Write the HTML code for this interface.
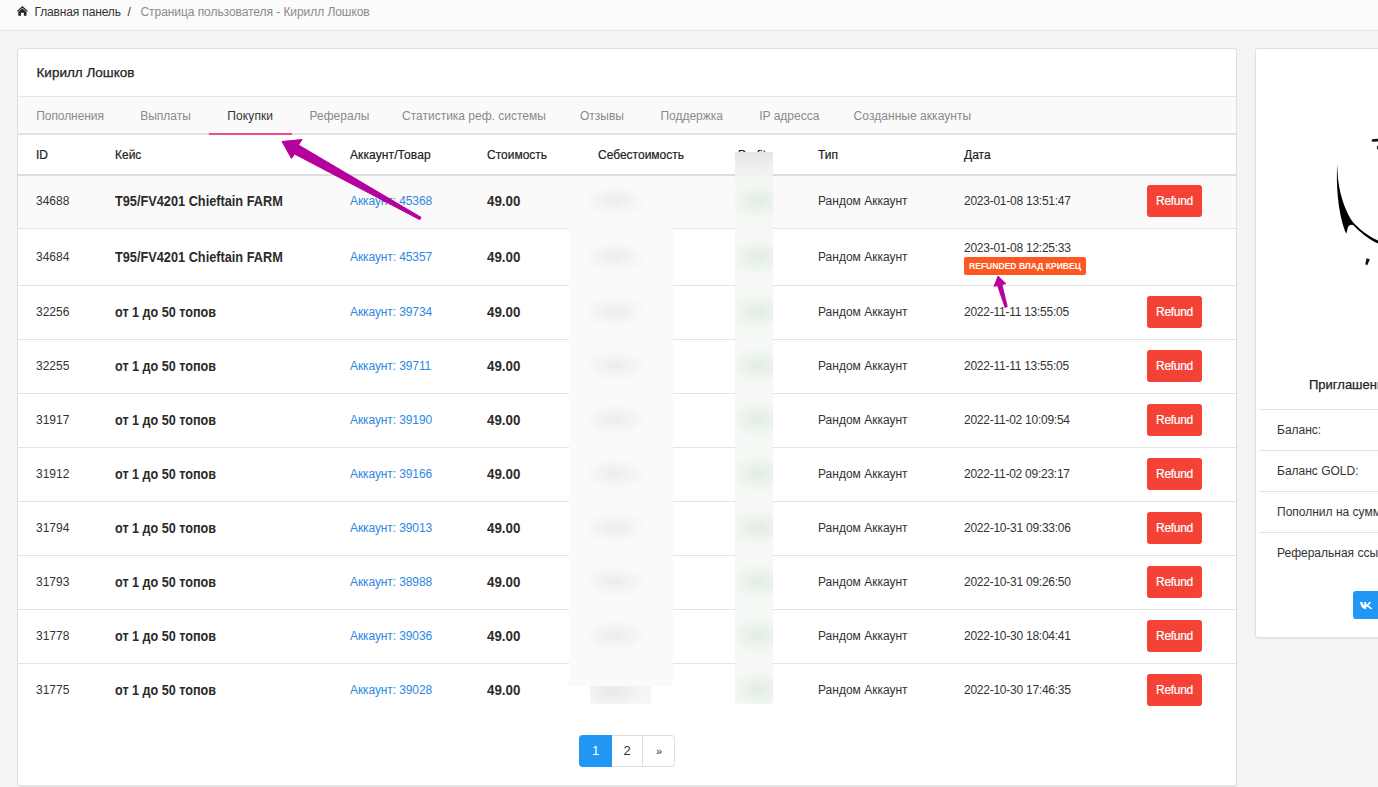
<!DOCTYPE html>
<html><head><meta charset="utf-8">
<style>
html,body{margin:0;padding:0;}
body{width:1378px;height:787px;overflow:hidden;background:#f4f4f4;position:relative;font-family:"Liberation Sans",sans-serif;color:#333;}
.t{position:absolute;white-space:pre;}
.blk{position:absolute;}
.b{font-weight:bold;}
.c333{color:#333;}
.c222{color:#222;}
.bc{color:#2b2b2b;}
.med{-webkit-text-stroke:0.2px currentColor;}
.lnk{color:#2d88e2;}
.gray{color:#8a8a8a;}
.btn{position:absolute;left:1147px;width:55px;height:32px;background:#f44336;border-radius:3px;color:#fff;font-size:12px;line-height:32px;text-align:center;letter-spacing:-0.3px;-webkit-text-stroke:0.2px #fff;}
.badge{position:absolute;left:964px;top:257px;width:122px;height:18px;background:#ff5722;border-radius:2px;color:#fff;font-weight:bold;font-size:9.5px;line-height:18px;text-align:center;}
.badge span{position:absolute;left:50%;top:0.3px;transform:translateX(-50%) scaleX(0.9);white-space:pre;}
</style></head><body>
<!-- breadcrumb -->
<div class="blk" style="left:0;top:0;width:1378px;height:30px;background:#fbfbfb;border-bottom:1px solid #e6e6e6"></div>
<svg class="blk" style="left:0;top:0" width="40" height="25" viewBox="0 0 40 25"><path d="M16.9 10.9 L22.4 6 L27.9 10.9 L27 11.8 L22.4 7.7 L17.8 11.8 Z M18.3 11.9 L22.4 8.4 L26.5 11.9 L26.5 15.8 L23.9 15.8 L23.9 12.8 L20.9 12.8 L20.9 15.8 L18.3 15.8 Z" fill="#222"/></svg>
<div class="t c333" style="left:34.5px;top:5.84px;font-size:12px;line-height:12px;letter-spacing:-0.15px">Главная панель</div>
<div class="t c333" style="left:127.5px;top:5.84px;font-size:12px;line-height:12px;">/</div>
<div class="t gray" style="left:140.5px;top:5.84px;font-size:12px;line-height:12px;letter-spacing:-0.06px">Страница пользователя - Кирилл Лошков</div>

<!-- main card -->
<div class="blk" style="left:17px;top:48px;width:1218px;height:736px;background:#fff;border:1px solid #e0e0e0;border-radius:3px;box-shadow:0 1px 1px rgba(0,0,0,0.05)"></div>
<div class="t c222" style="left:36.5px;top:65.57px;font-size:13.5px;line-height:13.5px;-webkit-text-stroke:0.25px #222">Кирилл Лошков</div>
<div class="blk" style="left:18px;top:96px;width:1218px;height:1px;background:#e6e6e6"></div>
<div class="blk" style="left:18px;top:97px;width:1218px;height:36px;background:#fafafa"></div>
<div class="blk" style="left:18px;top:133px;width:1218px;height:2px;background:#e2e2e2"></div>
<div class="t gray" style="left:36.3px;top:110.34px;font-size:12px;line-height:12px;letter-spacing:-0.08px">Пополнения</div>
<div class="t gray" style="left:140.2px;top:110.34px;font-size:12px;line-height:12px;">Выплаты</div>
<div class="t c333" style="left:227.3px;top:110.34px;font-size:12px;line-height:12px;letter-spacing:0.1px">Покупки</div>
<div class="t gray" style="left:309.6px;top:110.34px;font-size:12px;line-height:12px;">Рефералы</div>
<div class="t gray" style="left:402px;top:110.34px;font-size:12px;line-height:12px;">Статистика реф. системы</div>
<div class="t gray" style="left:580px;top:110.34px;font-size:12px;line-height:12px;">Отзывы</div>
<div class="t gray" style="left:660.4px;top:110.34px;font-size:12px;line-height:12px;">Поддержка</div>
<div class="t gray" style="left:759.2px;top:110.34px;font-size:12px;line-height:12px;">IP адресса</div>
<div class="t gray" style="left:853.6px;top:110.34px;font-size:12px;line-height:12px;letter-spacing:0.05px">Созданные аккаунты</div>
<div class="blk" style="left:209px;top:133px;width:83px;height:2px;background:#ea5091"></div>

<!-- table header -->
<div class="t c222 med" style="left:36px;top:149.34px;font-size:12px;line-height:12px;">ID</div>
<div class="t c222 med" style="left:115px;top:149.34px;font-size:12px;line-height:12px;">Кейс</div>
<div class="t c222 med" style="left:350px;top:149.34px;font-size:12px;line-height:12px;letter-spacing:0.1px">Аккаунт/Товар</div>
<div class="t c222 med" style="left:487px;top:149.34px;font-size:12px;line-height:12px;">Стоимость</div>
<div class="t c222 med" style="left:598px;top:149.34px;font-size:12px;line-height:12px;">Себестоимость</div>
<div class="t c222 med" style="left:738px;top:149.34px;font-size:12px;line-height:12px;">Profit</div>
<div class="t c222 med" style="left:818px;top:149.34px;font-size:12px;line-height:12px;">Тип</div>
<div class="t c222 med" style="left:964px;top:149.34px;font-size:12px;line-height:12px;">Дата</div>
<div class="blk" style="left:18px;top:174px;width:1218px;height:2px;background:#dcdcdc"></div>

<div class="blk" style="left:18px;top:176px;width:1218px;height:52px;background:#fafafa"></div>
<div class="blk" style="left:18px;top:228px;width:1218px;height:1px;background:#e3e3e3"></div>
<div class="t c333" style="left:36px;top:195.34px;font-size:12px;line-height:12px;">34688</div>
<div class="t b bc" style="left:115px;top:194.25px;font-size:14px;line-height:14px;transform:scaleX(0.91);transform-origin:0 0">T95/FV4201 Chieftain FARM</div>
<div class="t lnk" style="left:350px;top:195.34px;font-size:12px;line-height:12px;letter-spacing:-0.1px">Аккаунт: 45368</div>
<div class="t b bc" style="left:487px;top:194.25px;font-size:14px;line-height:14px;transform:scaleX(0.95);transform-origin:0 0">49.00</div>
<div class="t c333" style="left:818px;top:195.34px;font-size:12px;line-height:12px;">Рандом Аккаунт</div>
<div class="t c333" style="left:964px;top:195.34px;font-size:12px;line-height:12px;letter-spacing:-0.25px">2023-01-08 13:51:47</div>
<div class="btn" style="top:185.0px">Refund</div>
<div class="blk" style="left:18px;top:285px;width:1218px;height:1px;background:#e3e3e3"></div>
<div class="t c333" style="left:36px;top:250.84px;font-size:12px;line-height:12px;">34684</div>
<div class="t b bc" style="left:115px;top:249.75px;font-size:14px;line-height:14px;transform:scaleX(0.91);transform-origin:0 0">T95/FV4201 Chieftain FARM</div>
<div class="t lnk" style="left:350px;top:250.84px;font-size:12px;line-height:12px;letter-spacing:-0.1px">Аккаунт: 45357</div>
<div class="t b bc" style="left:487px;top:249.75px;font-size:14px;line-height:14px;transform:scaleX(0.95);transform-origin:0 0">49.00</div>
<div class="t c333" style="left:818px;top:250.84px;font-size:12px;line-height:12px;">Рандом Аккаунт</div>
<div class="t c333" style="left:964px;top:241.84px;font-size:12px;line-height:12px;letter-spacing:-0.25px">2023-01-08 12:25:33</div>
<div class="badge"><span>REFUNDED ВЛАД КРИВЕЦ</span></div>
<div class="blk" style="left:18px;top:339px;width:1218px;height:1px;background:#e3e3e3"></div>
<div class="t c333" style="left:36px;top:305.84px;font-size:12px;line-height:12px;">32256</div>
<div class="t b bc" style="left:115px;top:304.75px;font-size:14px;line-height:14px;transform:scaleX(0.9);transform-origin:0 0">от 1 до 50 топов</div>
<div class="t lnk" style="left:350px;top:305.84px;font-size:12px;line-height:12px;letter-spacing:-0.1px">Аккаунт: 39734</div>
<div class="t b bc" style="left:487px;top:304.75px;font-size:14px;line-height:14px;transform:scaleX(0.95);transform-origin:0 0">49.00</div>
<div class="t c333" style="left:818px;top:305.84px;font-size:12px;line-height:12px;">Рандом Аккаунт</div>
<div class="t c333" style="left:964px;top:305.84px;font-size:12px;line-height:12px;letter-spacing:-0.25px">2022-11-11 13:55:05</div>
<div class="btn" style="top:295.5px">Refund</div>
<div class="blk" style="left:18px;top:393px;width:1218px;height:1px;background:#e3e3e3"></div>
<div class="t c333" style="left:36px;top:359.84px;font-size:12px;line-height:12px;">32255</div>
<div class="t b bc" style="left:115px;top:358.75px;font-size:14px;line-height:14px;transform:scaleX(0.9);transform-origin:0 0">от 1 до 50 топов</div>
<div class="t lnk" style="left:350px;top:359.84px;font-size:12px;line-height:12px;letter-spacing:-0.1px">Аккаунт: 39711</div>
<div class="t b bc" style="left:487px;top:358.75px;font-size:14px;line-height:14px;transform:scaleX(0.95);transform-origin:0 0">49.00</div>
<div class="t c333" style="left:818px;top:359.84px;font-size:12px;line-height:12px;">Рандом Аккаунт</div>
<div class="t c333" style="left:964px;top:359.84px;font-size:12px;line-height:12px;letter-spacing:-0.25px">2022-11-11 13:55:05</div>
<div class="btn" style="top:349.5px">Refund</div>
<div class="blk" style="left:18px;top:447px;width:1218px;height:1px;background:#e3e3e3"></div>
<div class="t c333" style="left:36px;top:413.84px;font-size:12px;line-height:12px;">31917</div>
<div class="t b bc" style="left:115px;top:412.75px;font-size:14px;line-height:14px;transform:scaleX(0.9);transform-origin:0 0">от 1 до 50 топов</div>
<div class="t lnk" style="left:350px;top:413.84px;font-size:12px;line-height:12px;letter-spacing:-0.1px">Аккаунт: 39190</div>
<div class="t b bc" style="left:487px;top:412.75px;font-size:14px;line-height:14px;transform:scaleX(0.95);transform-origin:0 0">49.00</div>
<div class="t c333" style="left:818px;top:413.84px;font-size:12px;line-height:12px;">Рандом Аккаунт</div>
<div class="t c333" style="left:964px;top:413.84px;font-size:12px;line-height:12px;letter-spacing:-0.25px">2022-11-02 10:09:54</div>
<div class="btn" style="top:403.5px">Refund</div>
<div class="blk" style="left:18px;top:501px;width:1218px;height:1px;background:#e3e3e3"></div>
<div class="t c333" style="left:36px;top:467.84px;font-size:12px;line-height:12px;">31912</div>
<div class="t b bc" style="left:115px;top:466.75px;font-size:14px;line-height:14px;transform:scaleX(0.9);transform-origin:0 0">от 1 до 50 топов</div>
<div class="t lnk" style="left:350px;top:467.84px;font-size:12px;line-height:12px;letter-spacing:-0.1px">Аккаунт: 39166</div>
<div class="t b bc" style="left:487px;top:466.75px;font-size:14px;line-height:14px;transform:scaleX(0.95);transform-origin:0 0">49.00</div>
<div class="t c333" style="left:818px;top:467.84px;font-size:12px;line-height:12px;">Рандом Аккаунт</div>
<div class="t c333" style="left:964px;top:467.84px;font-size:12px;line-height:12px;letter-spacing:-0.25px">2022-11-02 09:23:17</div>
<div class="btn" style="top:457.5px">Refund</div>
<div class="blk" style="left:18px;top:555px;width:1218px;height:1px;background:#e3e3e3"></div>
<div class="t c333" style="left:36px;top:521.84px;font-size:12px;line-height:12px;">31794</div>
<div class="t b bc" style="left:115px;top:520.75px;font-size:14px;line-height:14px;transform:scaleX(0.9);transform-origin:0 0">от 1 до 50 топов</div>
<div class="t lnk" style="left:350px;top:521.84px;font-size:12px;line-height:12px;letter-spacing:-0.1px">Аккаунт: 39013</div>
<div class="t b bc" style="left:487px;top:520.75px;font-size:14px;line-height:14px;transform:scaleX(0.95);transform-origin:0 0">49.00</div>
<div class="t c333" style="left:818px;top:521.84px;font-size:12px;line-height:12px;">Рандом Аккаунт</div>
<div class="t c333" style="left:964px;top:521.84px;font-size:12px;line-height:12px;letter-spacing:-0.25px">2022-10-31 09:33:06</div>
<div class="btn" style="top:511.5px">Refund</div>
<div class="blk" style="left:18px;top:609px;width:1218px;height:1px;background:#e3e3e3"></div>
<div class="t c333" style="left:36px;top:575.84px;font-size:12px;line-height:12px;">31793</div>
<div class="t b bc" style="left:115px;top:574.75px;font-size:14px;line-height:14px;transform:scaleX(0.9);transform-origin:0 0">от 1 до 50 топов</div>
<div class="t lnk" style="left:350px;top:575.84px;font-size:12px;line-height:12px;letter-spacing:-0.1px">Аккаунт: 38988</div>
<div class="t b bc" style="left:487px;top:574.75px;font-size:14px;line-height:14px;transform:scaleX(0.95);transform-origin:0 0">49.00</div>
<div class="t c333" style="left:818px;top:575.84px;font-size:12px;line-height:12px;">Рандом Аккаунт</div>
<div class="t c333" style="left:964px;top:575.84px;font-size:12px;line-height:12px;letter-spacing:-0.25px">2022-10-31 09:26:50</div>
<div class="btn" style="top:565.5px">Refund</div>
<div class="blk" style="left:18px;top:663px;width:1218px;height:1px;background:#e3e3e3"></div>
<div class="t c333" style="left:36px;top:629.84px;font-size:12px;line-height:12px;">31778</div>
<div class="t b bc" style="left:115px;top:628.75px;font-size:14px;line-height:14px;transform:scaleX(0.9);transform-origin:0 0">от 1 до 50 топов</div>
<div class="t lnk" style="left:350px;top:629.84px;font-size:12px;line-height:12px;letter-spacing:-0.1px">Аккаунт: 39036</div>
<div class="t b bc" style="left:487px;top:628.75px;font-size:14px;line-height:14px;transform:scaleX(0.95);transform-origin:0 0">49.00</div>
<div class="t c333" style="left:818px;top:629.84px;font-size:12px;line-height:12px;">Рандом Аккаунт</div>
<div class="t c333" style="left:964px;top:629.84px;font-size:12px;line-height:12px;letter-spacing:-0.25px">2022-10-30 18:04:41</div>
<div class="btn" style="top:619.5px">Refund</div>
<div class="t c333" style="left:36px;top:683.84px;font-size:12px;line-height:12px;">31775</div>
<div class="t b bc" style="left:115px;top:682.75px;font-size:14px;line-height:14px;transform:scaleX(0.9);transform-origin:0 0">от 1 до 50 топов</div>
<div class="t lnk" style="left:350px;top:683.84px;font-size:12px;line-height:12px;letter-spacing:-0.1px">Аккаунт: 39028</div>
<div class="t b bc" style="left:487px;top:682.75px;font-size:14px;line-height:14px;transform:scaleX(0.95);transform-origin:0 0">49.00</div>
<div class="t c333" style="left:818px;top:683.84px;font-size:12px;line-height:12px;">Рандом Аккаунт</div>
<div class="t c333" style="left:964px;top:683.84px;font-size:12px;line-height:12px;letter-spacing:-0.25px">2022-10-30 17:46:35</div>
<div class="btn" style="top:673.5px">Refund</div>

<!-- blur boxes -->
<div class="blk" style="left:569px;top:183px;width:104px;height:503px;background:radial-gradient(ellipse 32px 16px at 46px 18.0px, rgba(0,0,0,0.055), rgba(0,0,0,0) ),radial-gradient(ellipse 32px 16px at 46px 74.0px, rgba(0,0,0,0.055), rgba(0,0,0,0) ),radial-gradient(ellipse 32px 16px at 46px 128.5px, rgba(0,0,0,0.055), rgba(0,0,0,0) ),radial-gradient(ellipse 32px 16px at 46px 182.5px, rgba(0,0,0,0.055), rgba(0,0,0,0) ),radial-gradient(ellipse 32px 16px at 46px 236.5px, rgba(0,0,0,0.055), rgba(0,0,0,0) ),radial-gradient(ellipse 32px 16px at 46px 290.5px, rgba(0,0,0,0.055), rgba(0,0,0,0) ),radial-gradient(ellipse 32px 16px at 46px 344.5px, rgba(0,0,0,0.055), rgba(0,0,0,0) ),radial-gradient(ellipse 32px 16px at 46px 398.5px, rgba(0,0,0,0.055), rgba(0,0,0,0) ),radial-gradient(ellipse 32px 16px at 46px 452.5px, rgba(0,0,0,0.055), rgba(0,0,0,0) ),#fafafa"></div>
<div class="blk" style="left:590px;top:686px;width:61px;height:18px;background:radial-gradient(ellipse 30px 16px at 24px 5px, rgba(0,0,0,0.06), rgba(0,0,0,0)),#f6f6f6"></div>
<div class="blk" style="left:735px;top:152px;width:38px;height:552px;background:radial-gradient(ellipse 30px 18px at 24px 49.0px, rgba(30,130,30,0.09), rgba(30,130,30,0) ),radial-gradient(ellipse 30px 18px at 24px 105.0px, rgba(30,130,30,0.09), rgba(30,130,30,0) ),radial-gradient(ellipse 30px 18px at 24px 159.5px, rgba(30,130,30,0.09), rgba(30,130,30,0) ),radial-gradient(ellipse 30px 18px at 24px 213.5px, rgba(30,130,30,0.09), rgba(30,130,30,0) ),radial-gradient(ellipse 30px 18px at 24px 267.5px, rgba(30,130,30,0.09), rgba(30,130,30,0) ),radial-gradient(ellipse 30px 18px at 24px 321.5px, rgba(30,130,30,0.09), rgba(30,130,30,0) ),radial-gradient(ellipse 30px 18px at 24px 375.5px, rgba(30,130,30,0.09), rgba(30,130,30,0) ),radial-gradient(ellipse 30px 18px at 24px 429.5px, rgba(30,130,30,0.09), rgba(30,130,30,0) ),radial-gradient(ellipse 30px 18px at 24px 483.5px, rgba(30,130,30,0.09), rgba(30,130,30,0) ),radial-gradient(ellipse 30px 18px at 24px 537.5px, rgba(30,130,30,0.09), rgba(30,130,30,0) ),linear-gradient(#e6e6e6 0px,#f0f1f0 18px,#f5f8f5 36px)"></div>
<!-- pagination -->
<div class="blk" style="left:579px;top:735px;width:96px;height:32px;border-radius:4px;background:#fff;box-shadow:inset 0 0 0 1px #dedede"></div>
<div class="blk" style="left:579px;top:735px;width:33px;height:32px;border-radius:4px 0 0 4px;background:#2196f3;color:#fff;font-size:13px;line-height:32px;text-align:center">1</div>
<div class="blk" style="left:642px;top:735px;width:1px;height:32px;background:#dedede"></div>
<div class="blk" style="left:612px;top:735px;width:30px;height:32px;color:#333;font-size:13px;line-height:32px;text-align:center">2</div>
<div class="blk" style="left:643px;top:735px;width:32px;height:32px;color:#333;font-size:11px;line-height:32px;text-align:center">»</div>

<!-- right card -->
<div class="blk" style="left:1255px;top:48px;width:140px;height:588px;background:#fff;border:1px solid #e0e0e0;border-radius:3px;box-shadow:0 1px 1px rgba(0,0,0,0.05)"></div>
<div class="t c222" style="left:1309px;top:378.00px;font-size:13px;line-height:13px;-webkit-text-stroke:0.25px #222">Приглашенные</div>
<div class="blk" style="left:1259px;top:409px;width:130px;height:1px;background:#e3e3e3"></div>
<div class="blk" style="left:1259px;top:450px;width:130px;height:1px;background:#e3e3e3"></div>
<div class="blk" style="left:1259px;top:491px;width:130px;height:1px;background:#e3e3e3"></div>
<div class="blk" style="left:1259px;top:532px;width:130px;height:1px;background:#e3e3e3"></div>
<div class="t c333" style="left:1277px;top:423.84px;font-size:12px;line-height:12px;">Баланс:</div>
<div class="t c333" style="left:1277px;top:464.84px;font-size:12px;line-height:12px;">Баланс GOLD:</div>
<div class="t c333" style="left:1277px;top:505.84px;font-size:12px;line-height:12px;">Пополнил на сумму</div>
<div class="t c333" style="left:1277px;top:546.84px;font-size:12px;line-height:12px;">Реферальная ссылка</div>
<div class="blk" style="left:1353px;top:591px;width:40px;height:28px;background:#2196f3;border-radius:3px"></div>
<svg class="blk" style="left:1360px;top:602px" width="13" height="7" viewBox="0 0 13 7"><path d="M0 0 H2.2 Q3.3 3 4.3 3.9 V0 H6.2 V2.8 Q8 2 9 0 H11 Q10.2 2.4 8.2 3.5 Q10.6 4.6 12.6 7 H10.3 Q8.8 5.2 6.2 4.4 V7 H5.2 Q1.3 7 0 0 Z" fill="#fff"/></svg>

<!-- avatar swoosh -->
<svg class="blk" style="left:1330px;top:130px" width="48" height="140" viewBox="1330 130 48 140">
<path d="M1337.2 165 C1336 185 1338 215 1346.3 233.8 L1348 227 C1349.5 224.5 1352 224 1353.7 225.5 C1360 232 1368 239 1378 243.5 L1378 240.6 C1368 236 1359 229 1352.6 221.8 C1347 214 1340 198 1337.9 178 C1337.6 172 1337.4 168 1337.2 165 Z" fill="#000"/>
<path d="M1371.5 140.3 Q1372 139 1374 139 L1378 138.8 L1378 141.6 L1373 141.7 Q1371.5 141.7 1371.5 140.3 Z" fill="#111"/>
<ellipse cx="1377.8" cy="147.5" rx="1" ry="2" fill="#333"/>
<path d="M1366.5 258.2 L1369.8 259.3 L1367.3 265.3 L1365.3 264.2 Z" fill="#111"/>
</svg>

<!-- arrows -->
<svg class="blk" style="left:0;top:0" width="1378" height="787" viewBox="0 0 1378 787">
<path d="M282 141.5 L302 139.5 L298.5 145 L421 217.3 L419.8 219.7 L294.5 154 L291.5 158.5 Z" fill="#b5009e" stroke="#b5009e" stroke-width="1" stroke-linejoin="round"/>
<path d="M998 276 L1006 283.7 L1002 284.5 L1007.3 306.6 L1005 307.6 L997.5 285.5 L994 286.5 Z" fill="#b5009e" stroke="#b5009e" stroke-width="0.8" stroke-linejoin="round"/>
</svg>
</body></html>
